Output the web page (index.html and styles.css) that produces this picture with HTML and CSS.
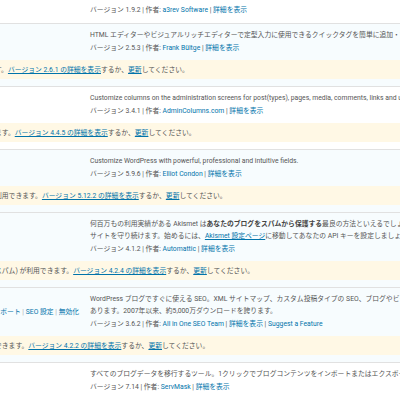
FILE: index.html
```html
<!DOCTYPE html>
<html lang="ja">
<head>
<meta charset="utf-8">
<title>プラグイン</title>
<link rel="stylesheet" href="styles.css">
</head>
<body>
<div class="plugins">

  <div class="plugin inactive top">
    <div class="col-name"></div>
    <div class="col-desc">
      <div class="meta">バージョン 1.9.2 | 作者: <a href="#">a3rev Software</a> | <a href="#">詳細を表示</a></div>
    </div>
  </div>

  <div class="plugin active">
    <div class="col-name"></div>
    <div class="col-desc">
      <div class="desc">HTML エディターやビジュアルリッチエディターで定型入力に使用できるクイックタグを簡単に追加・管理できます。</div>
      <div class="meta">バージョン 2.5.3 | 作者: <a href="#">Frank Bültge</a> | <a href="#">詳細を表示</a></div>
    </div>
  </div>
  <div class="update active">
    <div class="notice">す。<a href="#">バージョン 2.6.1 の詳細を表示</a>するか、<a href="#">更新</a>してください。</div>
  </div>

  <div class="plugin inactive">
    <div class="col-name"></div>
    <div class="col-desc">
      <div class="desc">Customize columns on the administration screens for post(types), pages, media, comments, links and users with an easy to use drag-and-drop interface.</div>
      <div class="meta">バージョン 3.4.1 | 作者: <a href="#">AdminColumns.com</a> | <a href="#">詳細を表示</a></div>
    </div>
  </div>
  <div class="update inactive">
    <div class="notice">ます。<a href="#">バージョン 4.4.5 の詳細を表示</a>するか、<a href="#">更新</a>してください。</div>
  </div>

  <div class="plugin active">
    <div class="col-name"></div>
    <div class="col-desc">
      <div class="desc">Customize WordPress with powerful, professional and intuitive fields.</div>
      <div class="meta">バージョン 5.9.6 | 作者: <a href="#">Elliot Condon</a> | <a href="#">詳細を表示</a></div>
    </div>
  </div>
  <div class="update active">
    <div class="notice">利用できます。<a href="#">バージョン 5.12.2 の詳細を表示</a>するか、<a href="#">更新</a>してください。</div>
  </div>

  <div class="plugin active">
    <div class="col-name"></div>
    <div class="col-desc">
      <div class="desc">何百万もの利用実績がある Akismet は<strong>あなたのブログをスパムから保護する</strong>最良の方法といえるでしょう。Akismet はあなたが眠っている間も<br>サイトを守り続けます。始めるには、<a class="ul" href="#">Akismet 設定ページ</a>に移動してあなたの API キーを設定しましょう。</div>
      <div class="meta">バージョン 4.1.2 | 作者: <a href="#">Automattic</a> | <a href="#">詳細を表示</a></div>
    </div>
  </div>
  <div class="update active">
    <div class="notice">スパム) が利用できます。<a href="#">バージョン 4.2.4 の詳細を表示</a>するか、<a href="#">更新</a>してください。</div>
  </div>

  <div class="plugin active">
    <div class="col-name">
      <div class="row-actions"><a href="#">サポート</a><span class="bar"> | </span><a href="#">SEO 設定</a><span class="bar"> | </span><a href="#">無効化</a></div>
    </div>
    <div class="col-desc">
      <div class="desc">WordPress ブログですぐに使える SEO。XML サイトマップ、カスタム投稿タイプの SEO、ブログやビジネスサイトに最適な機能が<br>あります。2007年以来、約5,000万ダウンロードを誇ります。</div>
      <div class="meta">バージョン 3.6.2 | 作者: <a href="#">All in One SEO Team</a> | <a href="#">詳細を表示</a> | <a href="#">Suggest a Feature</a></div>
    </div>
  </div>
  <div class="update active">
    <div class="notice">できます。<a href="#">バージョン 4.2.2 の詳細を表示</a>するか、<a href="#">更新</a>してください。</div>
  </div>

  <div class="plugin inactive">
    <div class="col-name"></div>
    <div class="col-desc">
      <div class="desc">すべてのブログデータを移行するツール。1クリックでブログコンテンツをインポートまたはエクスポートできます。</div>
      <div class="meta">バージョン 7.14 | 作者: <a href="#">ServMask</a> | <a href="#">詳細を表示</a></div>
    </div>
  </div>

</div>
</body>
</html>
```

FILE: styles.css
```css
html, body {
  margin: 0;
  padding: 0;
  overflow: hidden;
  background: #fff;
}

body {
  font-family: Roboto, "Noto Sans CJK JP", sans-serif;
  font-size: 6.8px;
  line-height: 12px;
  color: #555;
}

a {
  color: #0073aa;
  text-decoration: none;
}

.plugins {
  margin-left: -20px;
  width: 700px;
}

.plugin {
  display: grid;
  grid-template-columns: 110px 1fr;
  padding-top: 5px;
}

.plugin.top {
  padding-top: 2.5px;
  padding-bottom: 6.5px;
  border-bottom: 1px solid #e1e1e1;
}

.active {
  background: #f7fcfe;
}

.inactive {
  background: #fff;
}

.col-name {
  padding-left: 13.5px;
  white-space: nowrap;
  overflow: hidden;
}

.row-actions {
  margin-top: 13.5px;
}

.row-actions .bar {
  color: #a7aaad;
}

.col-desc {
  white-space: nowrap;
}

.desc strong {
  font-weight: 700;
  color: #444;
}

.desc a.ul {
  text-decoration: underline;
}

.meta {
  margin-top: 1.5px;
}

.update {
  padding: 6px 0 6.5px;
  border-bottom: 1px solid #e1e1e1;
}

.notice {
  display: flex;
  align-items: center;
  height: 19px;
  padding-left: 15px;
  background: #fff8e5;
  white-space: nowrap;
}

.notice a {
  text-decoration: underline;
}
```
